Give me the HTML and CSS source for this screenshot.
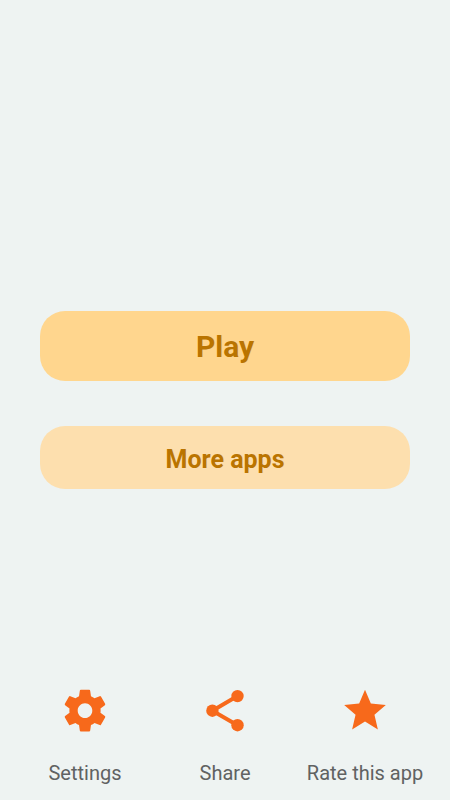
FILE: index.html
```html
<!DOCTYPE html>
<html lang="en">
<head>
<meta charset="utf-8">
<title>Play</title>
<link rel="stylesheet" href="styles.css">
</head>
<body>
<main class="menu">
  <button class="btn play">Play</button>
  <button class="btn more">More apps</button>
</main>
<nav class="actions">
  <a class="action"><svg class="icon" viewBox="0 -0.3 24 24"><path d="M19.43 12.98c.04-.32.07-.64.07-.98s-.03-.66-.07-.98l2.11-1.65c.19-.15.24-.42.12-.64l-2-3.46c-.12-.22-.39-.3-.61-.22l-2.49 1c-.52-.4-1.08-.73-1.69-.98l-.38-2.65C14.46 2.18 14.25 2 14 2h-4c-.25 0-.46.18-.49.42l-.38 2.65c-.61.25-1.17.59-1.69.98l-2.49-1c-.23-.09-.49 0-.61.22l-2 3.46c-.13.22-.07.49.12.64l2.11 1.65c-.04.32-.07.65-.07.98s.03.66.07.98l-2.11 1.65c-.19.15-.24.42-.12.64l2 3.46c.12.22.39.3.61.22l2.49-1c.52.4 1.08.73 1.69.98l.38 2.65c.03.24.24.42.49.42h4c.25 0 .46-.18.49-.42l.38-2.65c.61-.25 1.17-.59 1.69-.98l2.49 1c.23.09.49 0 .61-.22l2-3.46c.12-.22.07-.49-.12-.64l-2.11-1.65zM12 15.5c-1.93 0-3.5-1.57-3.5-3.5s1.57-3.500 3.500-3.500 3.500 1.570 3.500 3.500-1.570 3.500-3.500 3.500z"/></svg><span>Settings</span></a>
  <a class="action"><svg class="icon" viewBox="0 -0.7 50 50"><path class="link" d="M37.500 10.400L12.400 25l25.100 14.500"/><circle cx="37.500" cy="10.400" r="6.200"/><circle cx="12.400" cy="25" r="6.200"/><circle cx="37.500" cy="39.500" r="6.200"/></svg><span>Share</span></a>
  <a class="action"><svg class="icon" viewBox="0 -0.3 24 24"><path d="M12 17.270L18.180 21l-1.640-7.030L22 9.240l-7.190-.61L12 2 9.190 8.630 2 9.240l5.460 4.730L5.820 21z"/></svg><span>Rate this app</span></a>
</nav>
</body>
</html>
```
FILE: styles.css
```css
* { box-sizing: border-box; }
body { margin: 0; height: 800px; display: flex; flex-direction: column; background: #eef3f2; font-family: Roboto, sans-serif; overflow: hidden; }
.menu { flex: 1; padding: 310.6px 40px 0; display: flex; flex-direction: column; gap: 45.4px; }
.btn { border: 0; padding: 1px 0 0; color: #ba7400; font-family: inherit; font-weight: 700; }
.play { height: 70px; border-radius: 25px; background: #ffd68e; font-size: 30px; }
.more { height: 63px; padding-top: 4px; border-radius: 25px; background: #fddfae; font-size: 25px; }
.actions { display: grid; grid-template-columns: repeat(3, 140px); padding: 0 15px; height: 115px; }
.action { display: flex; flex-direction: column; align-items: center; gap: 26px; color: #606262; font-size: 20px; line-height: 25px; white-space: nowrap; }
.icon { width: 50px; height: 50px; fill: #f7691b; }
.link { fill: none; stroke: #f7691b; stroke-width: 4; }
```
